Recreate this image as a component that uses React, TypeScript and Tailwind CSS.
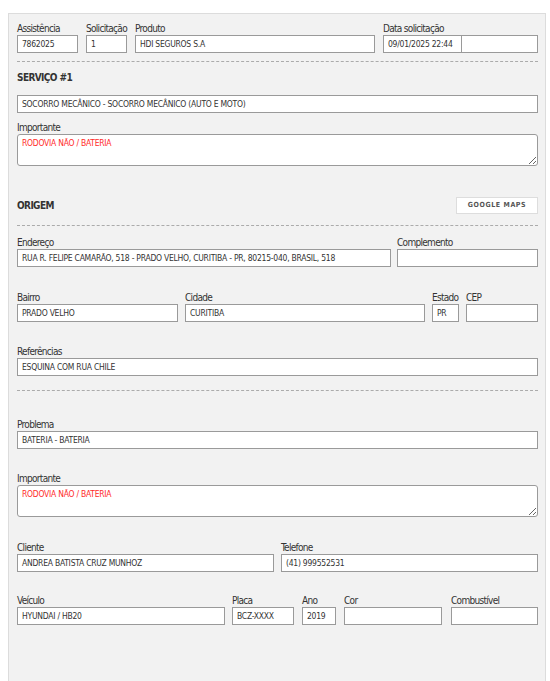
import React from "react";

const LBL =
  "block h-[14px] leading-[16px] text-[10px] tracking-[-0.7px] text-[#333] whitespace-nowrap overflow-visible";
const BOX =
  "h-[18px] border border-[#9a9a9a] bg-white px-[4px] text-[8.5px] tracking-[-0.25px] leading-[16px] text-[#333] whitespace-nowrap overflow-hidden";

function Field({ label, value, className }: { label: string; value?: string; className: string }) {
  return (
    <div className={"flex flex-col shrink-0 " + className}>
      <span className={LBL}>{label}</span>
      <div className={BOX}>{value ?? ""}</div>
    </div>
  );
}

function Area({ label, value }: { label: string; value: string }) {
  return (
    <div className="flex flex-col">
      <span className={LBL}>{label}</span>
      <textarea
        readOnly
        defaultValue={value}
        className="block h-[32px] w-full resize-y rounded-[3px] border border-[#9a9a9a] bg-white px-[4px] pt-[2px] text-[8.5px] tracking-[-0.25px] leading-[12px] text-[#ff2a2a] outline-none"
      />
    </div>
  );
}

function Dashed({ className }: { className: string }) {
  return <div className={"h-0 border-t border-dashed border-[#ababab] " + className} />;
}

export default function App() {
  return (
    <div className="min-h-[681px] bg-white pl-[8px] pt-[13px] font-['DejaVu_Sans_Condensed','DejaVu_Sans',sans-serif]">
      <div className="w-[538px] min-h-[700px] border border-[#dcdcdc] bg-[#f2f2f2] pl-[8px] pr-[7px] pt-[7px]">
        {/* Row 1 */}
        <div className="flex gap-[8px]">
          <Field label="Assistência" value="7862025" className="w-[61px]" />
          <Field label="Solicitação" value="1" className="w-[41px]" />
          <Field label="Produto" value="HDI SEGUROS S.A" className="w-[240px]" />
          <div className="flex w-[155px] flex-col">
            <span className={LBL}>Data solicitação</span>
            <div className="flex">
              <div className={BOX + " w-[79px]"}>09/01/2025 22:44</div>
              <div className={BOX + " flex-1 border-l-0"}></div>
            </div>
          </div>
        </div>

        <Dashed className="mt-[8px]" />

        <div className="mt-[9px] h-[14px] text-[10px] font-bold tracking-[-0.6px] leading-[14px] text-[#333]">
          SERVIÇO #1
        </div>

        <div className={BOX + " mt-[10px]"}>SOCORRO MECÂNICO - SOCORRO MECÂNICO (AUTO E MOTO)</div>

        <div className="mt-[7px]">
          <Area label="Importante" value="RODOVIA NÃO / BATERIA" />
        </div>

        <div className="mt-[31px] flex h-[17px] items-center justify-between">
          <span className="text-[10px] font-bold tracking-[-0.6px] text-[#333]">ORIGEM</span>
          <button className="h-[17px] w-[82px] border border-[#dddddd] bg-white text-[7px] font-bold tracking-[0.6px] text-[#555]">
            GOOGLE MAPS
          </button>
        </div>

        <Dashed className="mt-[11px]" />

        <div className="mt-[9px] flex gap-[6px]">
          <Field
            label="Endereço"
            value="RUA R. FELIPE CAMARÃO, 518 - PRADO VELHO, CURITIBA - PR, 80215-040, BRASIL, 518"
            className="w-[374px]"
          />
          <Field label="Complemento" className="w-[141px]" />
        </div>

        <div className="mt-[23px] flex gap-[7px]">
          <Field label="Bairro" value="PRADO VELHO" className="w-[161px]" />
          <Field label="Cidade" value="CURITIBA" className="w-[240px]" />
          <Field label="Estado" value="PR" className="w-[27px]" />
          <Field label="CEP" className="w-[72px]" />
        </div>

        <div className="mt-[22px]">
          <Field label="Referências" value="ESQUINA COM RUA CHILE" className="w-full" />
        </div>

        <Dashed className="mt-[14px]" />

        <div className="mt-[26px]">
          <Field label="Problema" value="BATERIA - BATERIA" className="w-full" />
        </div>

        <div className="mt-[22px]">
          <Area label="Importante" value="RODOVIA NÃO / BATERIA" />
        </div>

        <div className="mt-[23px] flex gap-[7px]">
          <Field label="Cliente" value="ANDREA BATISTA CRUZ MUNHOZ" className="w-[257px]" />
          <Field label="Telefone" value="(41) 999552531" className="w-[257px]" />
        </div>

        <div className="mt-[21px] flex">
          <Field label="Veículo" value="HYUNDAI / HB20" className="w-[208px]" />
          <Field label="Placa" value="BCZ-XXXX" className="ml-[7px] w-[62px]" />
          <Field label="Ano" value="2019" className="ml-[8px] w-[34px]" />
          <Field label="Cor" className="ml-[8px] w-[98px]" />
          <Field label="Combustível" className="ml-[9px] w-[87px]" />
        </div>
      </div>
    </div>
  );
}
